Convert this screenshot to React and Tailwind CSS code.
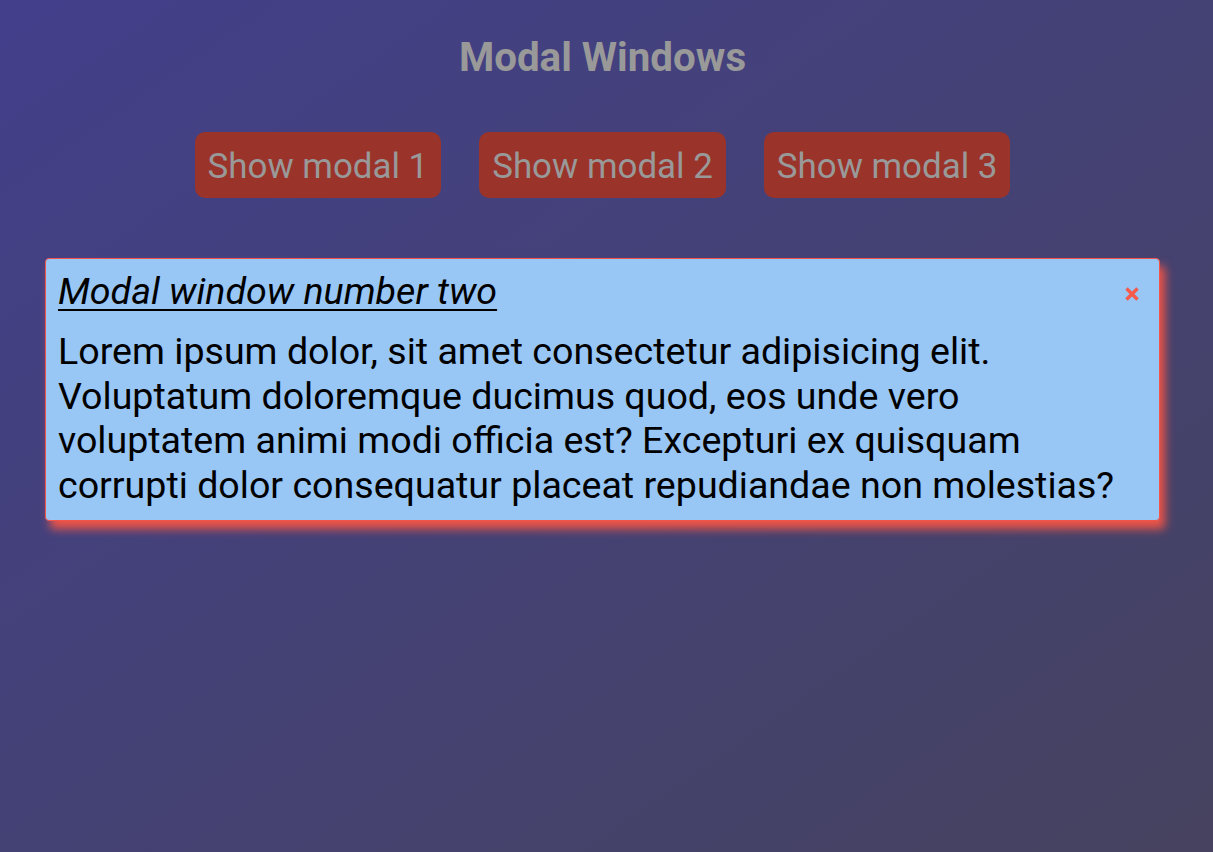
export default function App() {
  return (
    <div
      className="min-h-[852px] w-full bg-linear-to-br from-[#433f8b] to-[#46425f] pr-[8px] pt-[34px]"
      style={{ fontFamily: "Roboto, 'Noto Sans', sans-serif" }}
    >
      <h1 className="text-center text-[40.3px] font-bold leading-[47px] text-[#999999]">
        Modal Windows
      </h1>
      <div className="mt-[51px] flex justify-center gap-[38px]">
        {[1, 2, 3].map((n) => (
          <button
            key={n}
            className="rounded-[10px] bg-[#9a342b] px-[13px] pb-[10px] pt-[14px] text-[34.9px] leading-[42px] text-[#999999]"
          >
            Show modal {n}
          </button>
        ))}
      </div>
      <div className="mx-auto mt-[60px] w-[1115px] rounded-[4px] border border-[#f0544a] bg-[#98c6f5] px-[12px] pb-[12px] pt-[10px] text-black shadow-[5px_8px_10px_#ef5447]">
        <div className="flex items-start justify-between">
          <h2 className="text-[37.6px] italic leading-[45px] underline decoration-[2px] underline-offset-[5px]">
            Modal window number two
          </h2>
          <button className="mr-[7px] mt-[17px] flex h-[16px] w-[16px] items-center justify-center">
            <svg width="16" height="16" viewBox="0 0 16 16">
              <path d="M2.5 2.5 L13.5 13.5 M13.5 2.5 L2.5 13.5" stroke="#f55a4a" strokeWidth="3.4" strokeLinecap="butt" />
            </svg>
          </button>
        </div>
        <p className="mt-[15px] text-[37.6px] leading-[44.7px]">
          Lorem ipsum dolor, sit amet consectetur adipisicing elit. Voluptatum doloremque ducimus quod, eos unde vero
          voluptatem animi modi officia est? Excepturi ex quisquam corrupti dolor consequatur placeat repudiandae non
          molestias?
        </p>
      </div>
    </div>
  );
}
